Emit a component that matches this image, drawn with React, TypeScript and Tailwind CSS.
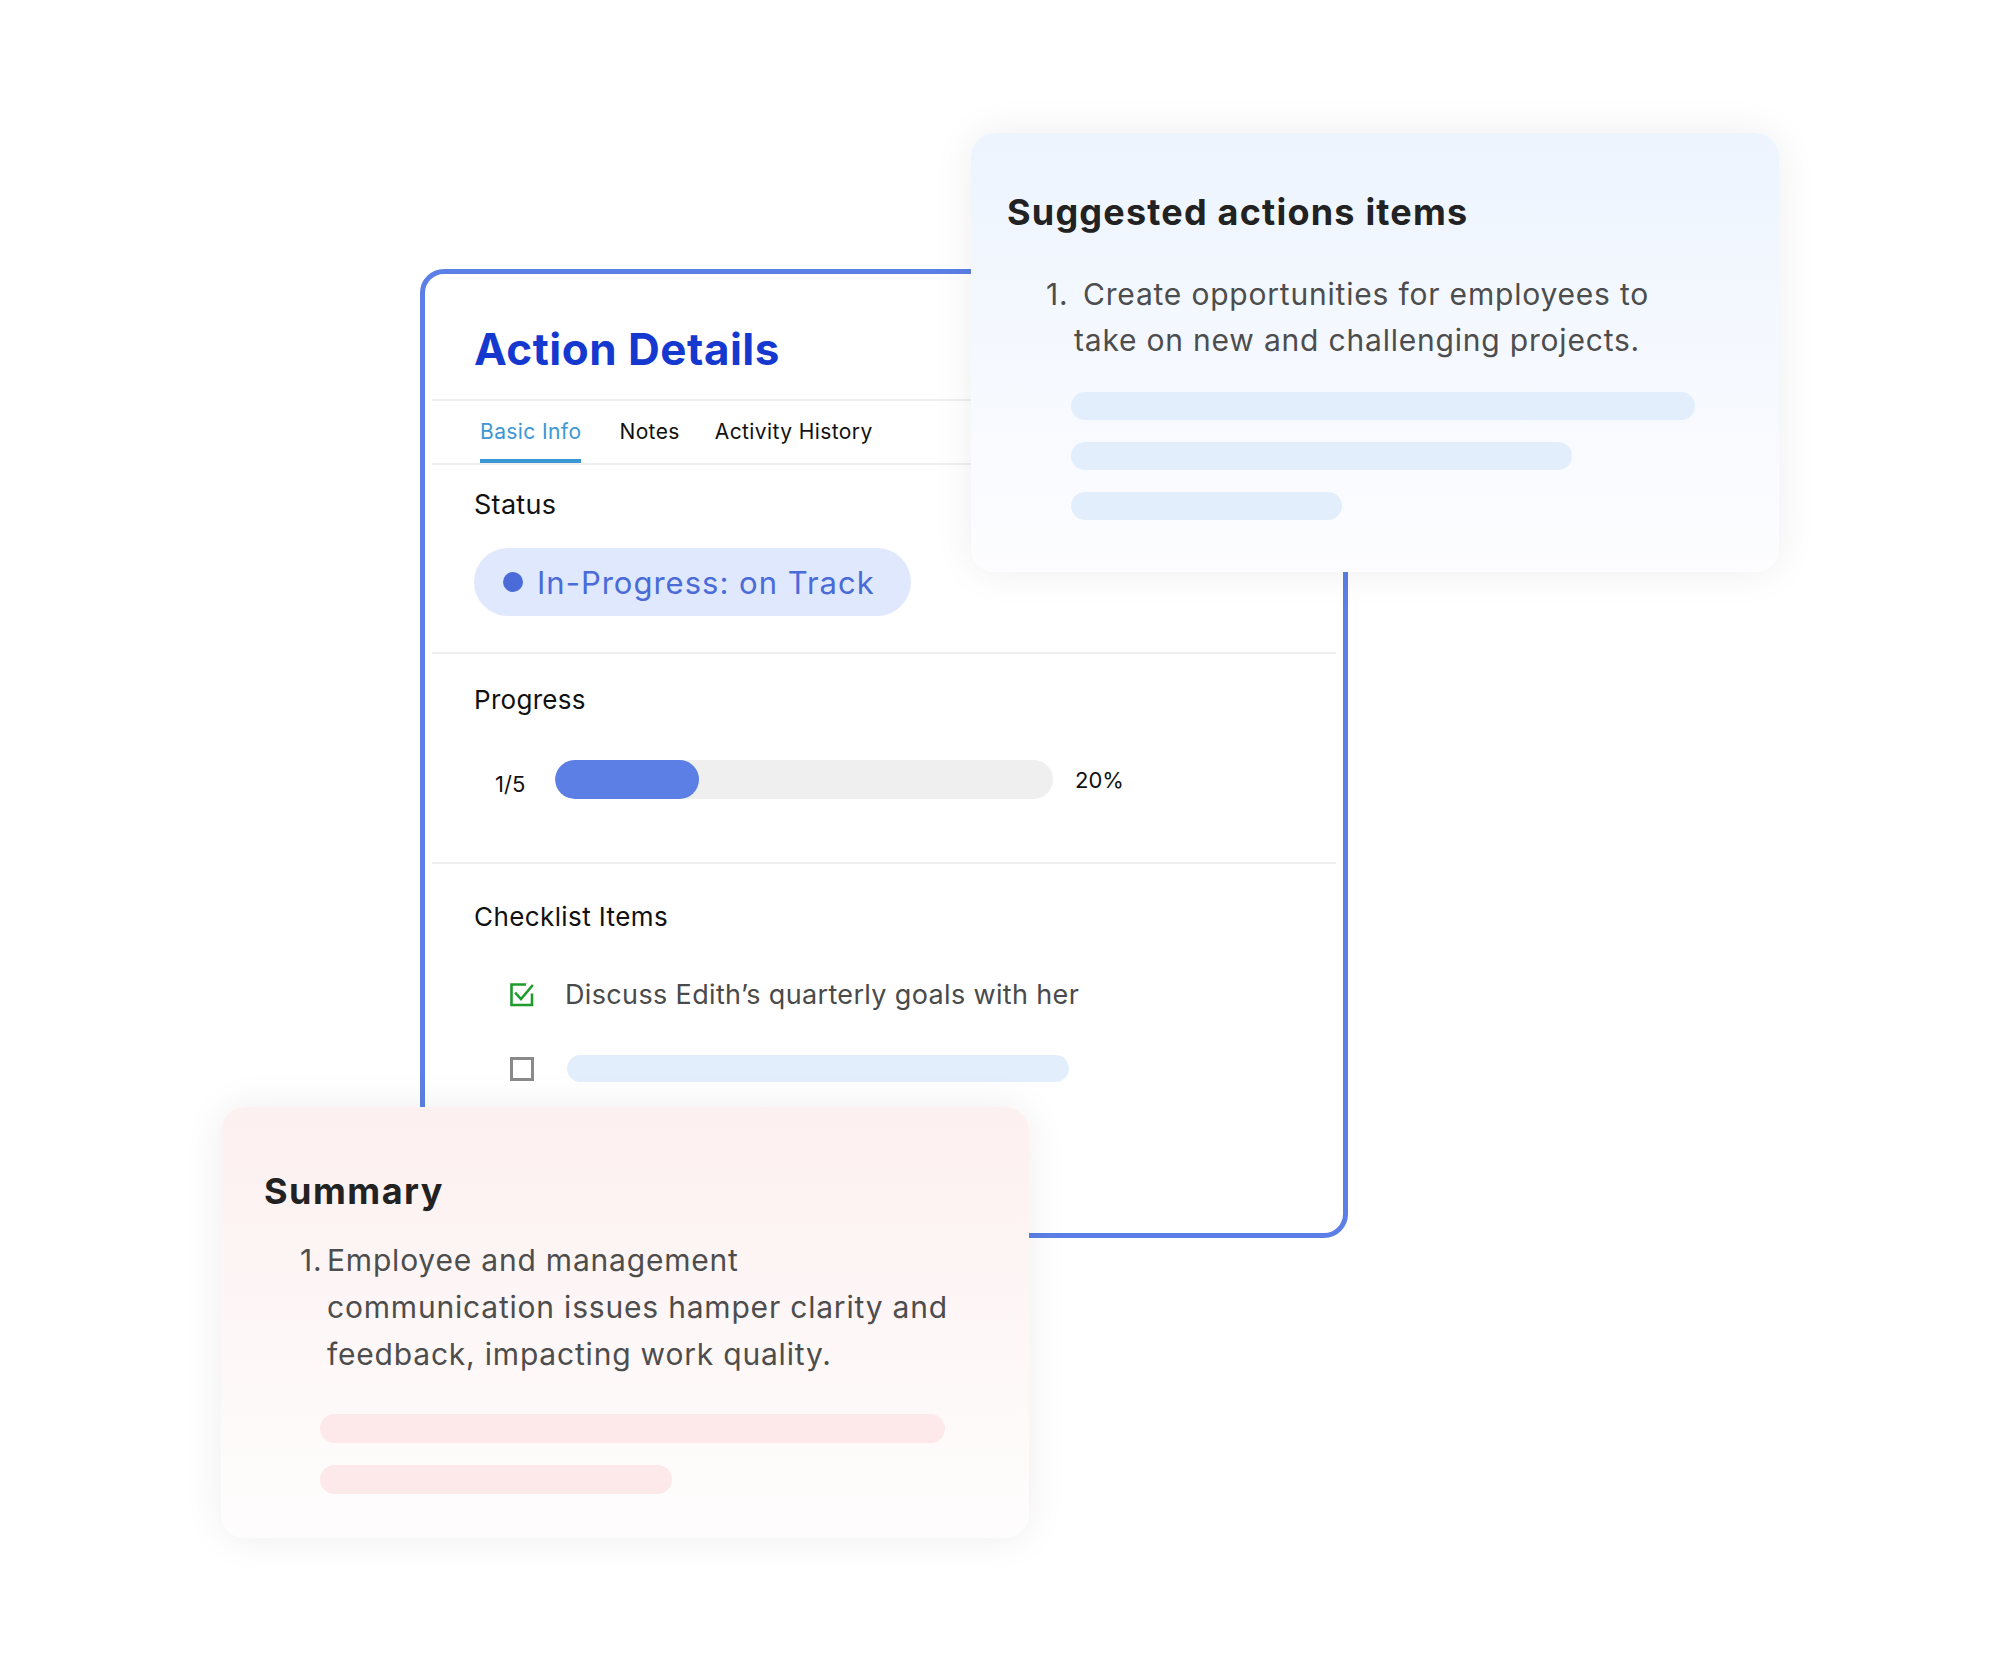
import React from "react";

const font = { fontFamily: "Inter, 'Liberation Sans', sans-serif" };

function CheckedIcon() {
  return (
    <svg width="24" height="24" viewBox="0 0 24 24" fill="none" className="shrink-0">
      <path d="M22 10.5V22H1.5V1.5H16" stroke="#1f9a2c" strokeWidth="2.6" strokeLinejoin="miter" />
      <path d="M6 10.5l5 5.5L22 3" stroke="#1f9a2c" strokeWidth="2.6" strokeLinecap="square" />
    </svg>
  );
}

function UncheckedIcon() {
  return <div className="w-[24px] h-[24px] border-[3px] border-[#8a8a8a] shrink-0" />;
}

function Sep() {
  return <div className="h-[2px] bg-[#efefef] mx-[7px]" />;
}

export default function App() {
  return (
    <div className="relative w-[2000px] h-[1672px] bg-white overflow-hidden" style={font}>
      {/* Main card */}
      <div className="ml-[420px] mt-[269px] w-[928px] h-[969px] border-[5px] border-[#5b7fe6] rounded-[24px] bg-white">
        <div className="pt-[53px] pl-[49px] pb-[28px]">
          <h1 className="text-[44px] leading-none font-bold text-[#1539cf] tracking-[0.5px]">Action Details</h1>
        </div>
        <Sep />
        <div className="flex pl-[55px] h-[62px] items-end tracking-[0.4px]">
          <div className="flex flex-col">
            <span className="text-[21px] leading-none text-[#3b97d3]">Basic Info</span>
            <div className="mt-[17px] h-[4px] bg-[#3b97d3]" />
          </div>
          <span className="ml-[38px] text-[21px] leading-none text-[#111] mb-[21px]">Notes</span>
          <span className="ml-[35px] text-[21px] leading-none text-[#111] mb-[21px]">Activity History</span>
        </div>
        <Sep />
        <div className="pl-[49px] pt-[26px] pb-[36px]">
          <div className="text-[27px] leading-none text-[#111] tracking-[0.3px]">Status</div>
          <div className="mt-[30px] inline-flex items-center h-[68px] rounded-full bg-[#dfe8fc] pl-[29px] pr-[36px]">
            <span className="w-[20px] h-[20px] rounded-full bg-[#4a6bd8]" />
            <span className="ml-[14px] text-[31px] leading-none text-[#4a6bd8] tracking-[1px]">
              In-Progress: on Track
            </span>
          </div>
        </div>
        <Sep />
        <div className="pl-[49px] pt-[33px] pb-[63px]">
          <div className="text-[26px] leading-none text-[#111] tracking-[0.3px]">Progress</div>
          <div className="mt-[47px] flex items-center">
            <span className="w-[81px] pl-[21px] pt-[9px] text-[22px] leading-none text-[#111]">1/5</span>
            <div className="w-[498px] h-[39px] rounded-full bg-[#efefef] overflow-hidden">
              <div className="h-full w-[144px] rounded-full bg-[#5b7fe4]" />
            </div>
            <span className="ml-[22px] text-[22px] leading-none text-[#111]">20%</span>
          </div>
        </div>
        <Sep />
        <div className="pl-[49px] pt-[40px]">
          <div className="text-[26px] leading-none text-[#111] tracking-[0.4px]">Checklist Items</div>
          <div className="mt-[51px] flex items-center pl-[36px]">
            <CheckedIcon />
            <span className="ml-[31px] text-[27px] leading-none text-[#4a4a4a] tracking-[0.35px]">
              Discuss Edith’s quarterly goals with her
            </span>
          </div>
          <div className="mt-[47px] flex items-center pl-[36px]">
            <UncheckedIcon />
            <div className="ml-[33px] w-[502px] h-[27px] rounded-full bg-[#e3eefd]" />
          </div>
        </div>
      </div>

      {/* Suggested actions card */}
      <div className="absolute left-[971px] top-[133px] w-[808px] h-[439px] rounded-[24px] bg-gradient-to-b from-[#edf4fe] to-[#fdfdff] shadow-[0_0_40px_rgba(0,0,0,0.07)] pt-[61px] pl-[36px]">
        <h2 className="text-[36px] leading-none font-bold text-[#222] tracking-[1.2px]">Suggested actions items</h2>
        <p className="mt-[41px] pl-[67px] text-[30px] leading-[46px] text-[#4d4d4d] tracking-[0.8px]">
          <span className="inline-block w-[37px] -ml-[28px]">1.</span>Create opportunities for employees to
          <br />
          take on new and challenging projects.
        </p>
        <div className="mt-[29px] ml-[64px] flex flex-col gap-[22px]">
          <div className="w-[624px] h-[28px] rounded-full bg-[#e3eefd]" />
          <div className="w-[501px] h-[28px] rounded-full bg-[#e3eefd]" />
          <div className="w-[271px] h-[28px] rounded-full bg-[#e3eefd]" />
        </div>
      </div>

      {/* Summary card */}
      <div className="absolute left-[221px] top-[1107px] w-[808px] h-[431px] rounded-[24px] bg-gradient-to-b from-[#fdf0f0] to-[#fefdfd] shadow-[0_0_40px_rgba(0,0,0,0.07)] pt-[66px] pl-[43px]">
        <h2 className="text-[36px] leading-none font-bold text-[#222] tracking-[1.5px]">Summary</h2>
        <p className="mt-[28px] pl-[63px] text-[30px] leading-[47px] text-[#4d4d4d] tracking-[0.8px]">
          <span className="inline-block w-[27px] -ml-[27px]">1.</span>Employee and management
          <br />
          communication issues hamper clarity and
          <br />
          feedback, impacting work quality.
        </p>
        <div className="mt-[36px] ml-[56px] flex flex-col gap-[22px]">
          <div className="w-[625px] h-[29px] rounded-full bg-[#fde9ea]" />
          <div className="w-[352px] h-[29px] rounded-full bg-[#fde9ea]" />
        </div>
      </div>
    </div>
  );
}
